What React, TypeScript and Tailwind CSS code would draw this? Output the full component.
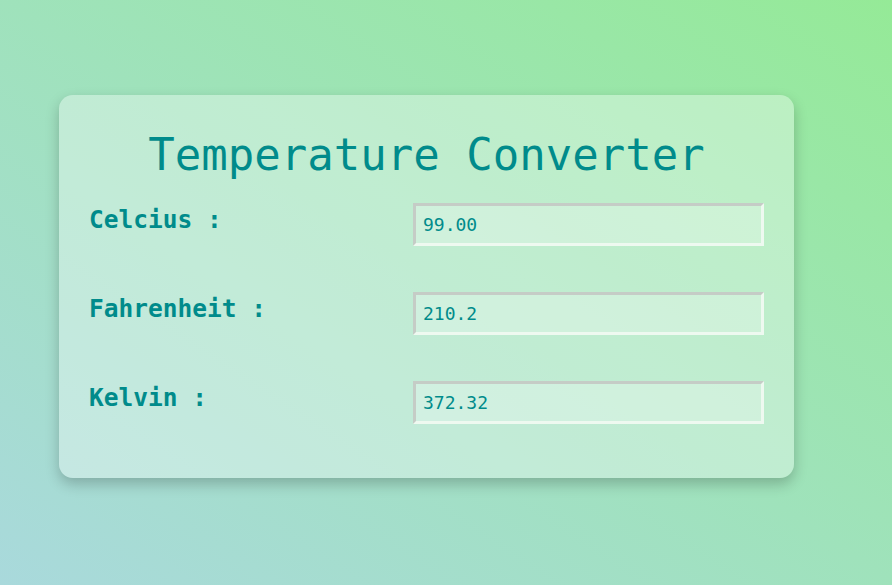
import { useState } from "react";

const mono = "font-['DejaVu_Sans_Mono',monospace]";

const Row = ({
  label,
  value,
  onChange,
}: {
  label: string;
  value: string;
  onChange: (v: string) => void;
}) => (
  <div className="flex items-start justify-between">
    <label className="mt-[2px] text-[24.5px] font-bold leading-[29px] text-[#008b8b]">
      {label}
    </label>
    <input
      value={value}
      onChange={(e) => onChange(e.target.value)}
      className={`${mono} h-[43px] w-[351px] border-[3px] border-t-[#c5ccc6] border-l-[#c5ccc6] border-b-[#eef9f0] border-r-[#eef9f0] bg-white/25 px-[7px] text-[18px] text-[#008b8b] outline-none`}
    />
  </div>
);

const App = () => {
  const [celcius, setCelcius] = useState("99.00");
  const [fahrenheit, setFahrenheit] = useState("210.2");
  const [kelvin, setKelvin] = useState("372.32");

  return (
    <div
      className={`${mono} min-h-screen w-full bg-gradient-to-tr from-[#a9d9dc] to-[#95ea97] pt-[95px] pl-[59px]`}
    >
      <div className="w-[735px] rounded-[14px] bg-white/35 px-[30px] pt-[34px] pb-[54px] shadow-[0_6px_14px_rgba(0,0,0,0.22)]">
        <h1 className="text-center text-[44px] font-normal leading-[51px] text-[#008b8b]">
          Temperature Converter
        </h1>
        <div className="mt-[23px] flex flex-col gap-[46px]">
          <Row label="Celcius :" value={celcius} onChange={setCelcius} />
          <Row label="Fahrenheit :" value={fahrenheit} onChange={setFahrenheit} />
          <Row label="Kelvin :" value={kelvin} onChange={setKelvin} />
        </div>
      </div>
    </div>
  );
};

export default App;
